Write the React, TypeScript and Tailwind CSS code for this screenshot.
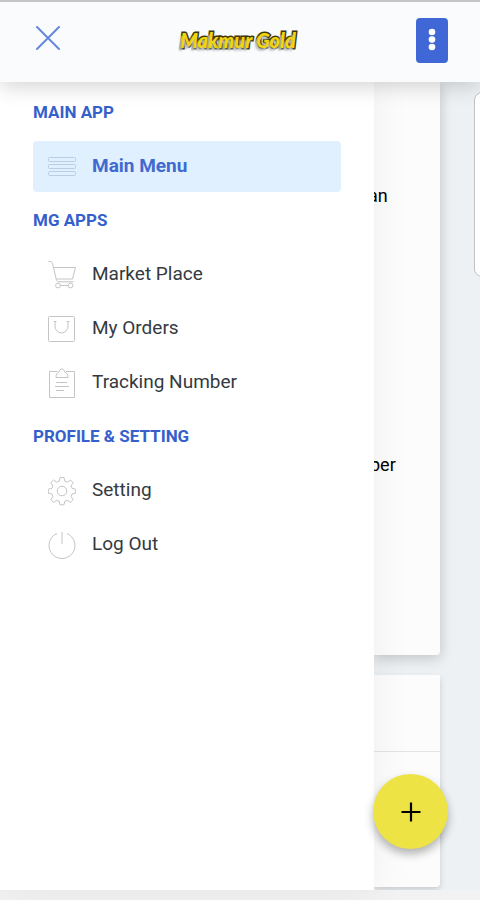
import type { ReactNode } from "react";
import clsx from "clsx";

const Icon = ({ children }: { children: ReactNode }) => (
  <svg
    viewBox="0 0 28 30"
    className="h-[30px] w-7 shrink-0"
    fill="none"
    stroke="currentColor"
    strokeWidth="1"
    aria-hidden="true"
  >
    {children}
  </svg>
);

const MenuIcon = () => (
  <Icon>
    <rect x="0.5" y="5.5" width="27" height="4" rx="1" />
    <rect x="0.5" y="12.5" width="27" height="4" rx="1" />
    <rect x="0.5" y="19.5" width="27" height="4" rx="1" />
  </Icon>
);

const CartIcon = () => (
  <Icon>
    <path d="M0.5 1.500h1.700c1.300 0 2 .6 2.300 1.800L8.300 19.500c.4 1.500 1.200 2.300 2.700 2.300h14.500M5.500 7.500h22l-3 11.500H8.200" />
    <circle cx="10" cy="25.500" r="2.400" />
    <circle cx="22.500" cy="25.500" r="2.400" />
    <path d="M12.500 25.500h7.500" />
  </Icon>
);

const BagIcon = () => (
  <Icon>
    <rect x="0.5" y="2.5" width="26" height="25" rx="1" />
    <path d="M7 7.500v4.500a6.500 7 0 0 0 13 0V7.500M5.500 7.500h3M18.500 7.500h3" />
  </Icon>
);

const ClipboardIcon = () => (
  <Icon>
    <path d="M9.500 3.500H1.500v26h25v-26H18" />
    <path d="M8 9.500c0-3 1-4.500 3.200-5.500.2-4 5.200-4 5.400 0C18.800 5 20 6.500 20 9.500z" />
    <path d="M8 14.500h11M7 18.500h14M8 22.500h8" />
  </Icon>
);

const GearIcon = () => (
  <Icon>
    <g transform="translate(14 15)">
      <path d="M-2-13.500h4l.8 3.700 2.500 1L8.500-11l2.700 2.700-2.100 3.200 1 2.500 3.600.8v4l-3.600.8-1 2.500 2.100 3.200-2.700 2.700-3.200-2.100-2.500 1-.8 3.500h-4l-.8-3.500-2.500-1-3.200 2.100-2.700-2.700 2.100-3.200-1-2.500-3.600-.8v-4l3.600-.8 1-2.500-2.100-3.200 2.700-2.700 3.200 2.200 2.500-1z" />
      <circle r="4.800" />
    </g>
  </Icon>
);

const PowerIcon = () => (
  <Icon>
    <path d="M9 3.500a13 13 0 1 0 10 0M14 2v12" />
  </Icon>
);

const sections = [
  {
    title: "MAIN APP",
    items: [{ label: "Main Menu", icon: <MenuIcon />, active: true }],
  },
  {
    title: "MG APPS",
    items: [
      { label: "Market Place", icon: <CartIcon /> },
      { label: "My Orders", icon: <BagIcon /> },
      { label: "Tracking Number", icon: <ClipboardIcon /> },
    ],
  },
  {
    title: "PROFILE & SETTING",
    items: [
      { label: "Setting", icon: <GearIcon /> },
      { label: "Log Out", icon: <PowerIcon /> },
    ],
  },
] as {
  title: string;
  items: { label: string; icon: ReactNode; active?: boolean }[];
}[];

const Header = () => (
  <header className="relative z-20 flex h-[82px] shrink-0 items-center justify-between border-t-2 border-[#c4c5c7] bg-[#fafbfd] pr-8 pb-1 pl-9 shadow-[0_4px_20px_rgba(0,0,0,0.18)]">
    <button
      type="button"
      aria-label="Close menu"
      className="pb-1 text-[#6488d9]"
    >
      <svg
        viewBox="0 0 24 24"
        className="h-6 w-6"
        fill="none"
        stroke="currentColor"
        strokeWidth="2"
        strokeLinecap="round"
      >
        <path d="M1 1l22 22M23 1L1 23" />
      </svg>
    </button>
    <span className="font-[Lato,sans-serif] text-xl leading-6 font-black text-[#f2d411] italic [-webkit-text-stroke:3px_#3d3806] [paint-order:stroke_fill] [text-shadow:-2px_3px_2px_#c3c8cb]">
      Makmur Gold
    </span>
    <button
      type="button"
      aria-label="More options"
      className="flex h-[45px] w-8 items-center justify-center rounded bg-[#3f68d6] text-white"
    >
      <svg viewBox="0 0 8 24" className="h-6 w-2" fill="currentColor">
        <circle cx="4" cy="4" r="3.300" />
        <circle cx="4" cy="11.500" r="3.300" />
        <circle cx="4" cy="19" r="3.300" />
      </svg>
    </button>
  </header>
);

const Sidebar = () => (
  <nav className="z-10 flex w-[374px] shrink-0 flex-col gap-4 bg-white px-[33px] pt-[18px] shadow-[0_0_40px_rgba(0,0,0,0.06)]">
    {sections.map((section) => (
      <section key={section.title} className="flex flex-col gap-[17px]">
        <h2 className="text-[17px] leading-6 font-bold text-[#3560cc]">
          {section.title}
        </h2>
        <ul className="flex flex-col gap-[3px]">
          {section.items.map((item) => (
            <li key={item.label}>
              <a
                href="#"
                className={clsx(
                  "flex h-[51px] items-center gap-4 rounded px-[15px] text-[19px]",
                  item.active
                    ? "bg-[#e0f0fe] font-bold text-[#416ad0]"
                    : "text-[#343a40]"
                )}
              >
                <span
                  className={item.active ? "text-[#b9cee4]" : "text-[#c4c4c4]"}
                >
                  {item.icon}
                </span>
                {item.label}
              </a>
            </li>
          ))}
        </ul>
      </section>
    ))}
  </nav>
);

const Content = () => (
  <main className="flex min-w-0 flex-1 gap-[34px] overflow-hidden bg-[#edf1f4]">
    <div className="flex flex-1 flex-col gap-5">
      <div className="flex h-[573px] flex-col rounded-br bg-[#fcfcfc] pt-[102px] text-[18px] leading-6 text-black shadow-[0_3px_14px_rgba(8,10,12,0.2)]">
        <p className="-ml-1.5">an</p>
        <p className="-ml-1 pt-[245px]">ber</p>
      </div>
      <div className="flex h-[212px] flex-col rounded-br bg-[#fcfcfc] shadow-[0_3px_6px_rgba(8,10,12,0.15)]">
        <div className="h-[77px] border-b border-[#e2e3e5]" />
      </div>
    </div>
    <div className="mt-2.5 -mr-3 h-[185px] w-[18px] shrink-0 rounded-l-lg border border-[#bfc3c7] bg-white" />
  </main>
);

export default function App() {
  return (
    <div className="relative flex min-h-screen flex-col overflow-hidden bg-[#f2f2f2] pb-2.5 font-[Roboto,sans-serif]">
      <Header />
      <div className="flex flex-1">
        <Sidebar />
        <Content />
      </div>
      <button
        type="button"
        aria-label="Add"
        className="absolute right-8 bottom-[51px] z-20 flex h-[75px] w-[75px] items-center justify-center rounded-full bg-[#eee345] text-black shadow-[0_5px_10px_rgba(0,0,0,0.3)]"
      >
        <svg
          viewBox="0 0 20 20"
          className="h-5 w-5"
          fill="none"
          stroke="currentColor"
          strokeWidth="2.200"
        >
          <path d="M10 0.500v19M0.500 10h19" />
        </svg>
      </button>
    </div>
  );
}
